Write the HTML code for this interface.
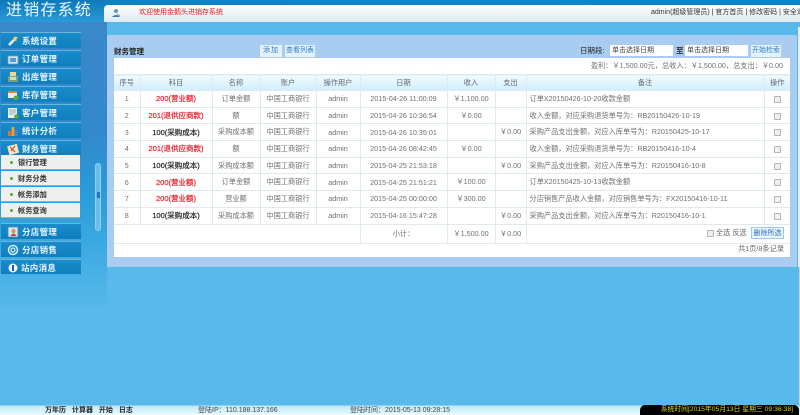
<!DOCTYPE html>
<html><head><meta charset="utf-8"><style>
html,body{margin:0;padding:0}
body{width:800px;height:415px;position:relative;overflow:hidden;background:#58b9ea;font-family:"Liberation Sans","Noto Sans CJK SC",sans-serif;font-size:7.5px;color:#666}
#w{left:0;top:0;width:800px;height:415px;filter:blur(.3px);overflow:hidden}
div{position:absolute;box-sizing:border-box;white-space:nowrap}
.m{left:1px;width:80px;height:16px;background:linear-gradient(#1a8ccb,#0f7ebc);border-top:1px solid #6bb4dc;color:#e8f6ff;font-weight:bold;font-size:8.5px;line-height:16px;padding-left:21px;letter-spacing:.3px}
.m svg{position:absolute;left:6px;top:2px}
.s{left:1px;width:79px;height:15px;background:#efefef;border-bottom:1px solid #aaa;color:#333;font-size:7.2px;line-height:16px;padding-left:17px;font-weight:bold}
.s:before{content:"";position:absolute;left:9px;top:6px;width:3px;height:3px;border-radius:2px;background:#5aa832}
table{border-collapse:collapse;table-layout:fixed;position:absolute;left:114px;top:74px;width:676px;background:#fff}
td,th{border:1px solid #dfeaee;text-align:center;padding:0;height:15.7px;font-size:7.2px;font-weight:normal;color:#707070;white-space:nowrap;overflow:hidden}
tr td:first-child,tr th:first-child{border-left:none}
tr td:last-child,tr th:last-child{border-right:none}
th{background:linear-gradient(#f2fcff,#cfeefa);height:15px;color:#667}
td.l{text-align:left;padding-left:3px}
td.r{color:#e8202a;font-size:7.5px;-webkit-text-stroke:.2px #e8202a}
td.b{color:#222;font-size:7.5px;-webkit-text-stroke:.2px #222}
i.c{display:inline-block;width:7px;height:7px;border:1px solid #b4b4b4;border-radius:1px;background:#f0f0f0;vertical-align:middle;box-sizing:border-box}
.btn{background:#e4f2fb;color:#2a7cc0;font-size:7px;line-height:12px;height:12px;text-align:center}
.in{background:#fff;color:#444;height:11px;line-height:12px;font-size:7px;padding-left:2px;width:63px}
</style></head><body><div id="w">
<div style="left:0;top:0;width:800px;height:22px;background:linear-gradient(90deg,#1180c0,#0f86c8 40%,#0c86c8)"></div>
<div style="left:0;top:0;width:104px;height:22px;background:linear-gradient(#0e78b8,#2a9ad8)"></div>
<div style="left:6px;top:0;color:#e8f8ff;font-size:16px;line-height:21px;letter-spacing:1.2px;height:22px">进销存系统</div>
<div style="left:104px;top:5px;width:696px;height:17px;background:linear-gradient(#fff,#dceaf2);border-radius:4px 0 0 0"></div>
<svg style="position:absolute;left:111px;top:8px" width="10" height="10" viewBox="0 0 10 10"><circle cx="5" cy="3" r="2" fill="#5a9ad0"/><path d="M1 9q4-4 8 0z" fill="#3a78b8"/><path d="M6 6l3 2" stroke="#c84" stroke-width="1"/></svg>
<div style="left:139px;top:8px;color:#e02020;font-size:7px;line-height:10px">欢迎使用金鹅头进销存系统</div>
<div style="right:0;top:8px;color:#333;font-size:7px;line-height:10px;width:179px;overflow:hidden;left:651px">admin(超级管理员) | 官方首页 | 修改密码 | 安全退出</div>

<div style="left:0;top:22px;width:107px;height:383px;background:linear-gradient(#3a88c8 0,#3288cc 28%,#2a9cd8 45%,#3fabe2 60%,#58b9ea 75%)"></div>
<div style="left:107px;top:35px;width:690px;height:232px;background:#a9cdf0"></div>
<div style="left:798px;top:27px;width:2px;height:240px;background:#e6eef4"></div>
<div style="left:799px;top:267px;width:1px;height:138px;background:#c8d8e4"></div>
<div style="left:114px;top:47px;color:#222;font-weight:bold;font-size:7.5px;line-height:10px">财务管理</div>
<div class="btn" style="left:260px;top:45px;width:22px;letter-spacing:1px">添加</div>
<div class="btn" style="left:285px;top:45px;width:30px">查看列表</div>
<div style="left:580px;top:45px;color:#222;font-size:7.5px;line-height:12px">日期段:</div>
<div class="in" style="left:610px;top:45px">单击选择日期</div>
<div style="left:676px;top:45px;color:#333;font-size:7.5px;line-height:12px;font-weight:bold">至</div>
<div class="in" style="left:685px;top:45px">单击选择日期</div>
<div class="btn" style="left:751px;top:45px;width:30px">开始检索</div>

<div style="left:114px;top:58px;width:676px;height:199px;background:#fff"></div>
<div style="left:114px;top:58px;width:669px;height:16px;text-align:right;color:#707070;font-size:7.2px;line-height:16px">盈利：￥1,500.00元，总收入：￥1,500.00，总支出：￥0.00</div>
<table>
<colgroup><col style="width:26px"><col style="width:72px"><col style="width:48px"><col style="width:56px"><col style="width:44px"><col style="width:87px"><col style="width:48px"><col style="width:31px"><col style="width:238px"><col style="width:26px"></colgroup>
<tr><th>序号</th><th>科目</th><th>名称</th><th>账户</th><th>操作用户</th><th>日期</th><th>收入</th><th>支出</th><th>备注</th><th>操作</th></tr>
<tr><td>1</td><td class="r">200(营业额)</td><td>订单金额</td><td>中国工商银行</td><td>admin</td><td>2015-04-26 11:00:09</td><td>￥1,100.00</td><td></td><td class="l">订单X20150426-10-20收款金额</td><td><i class="c"></i></td></tr>
<tr><td>2</td><td class="r">201(退供应商款)</td><td>额</td><td>中国工商银行</td><td>admin</td><td>2015-04-26 10:36:54</td><td>￥0.00</td><td></td><td class="l">收入金额，对应采购退货单号为：RB20150426-10-19</td><td><i class="c"></i></td></tr>
<tr><td>3</td><td class="b">100(采购成本)</td><td>采购成本额</td><td>中国工商银行</td><td>admin</td><td>2015-04-26 10:35:01</td><td></td><td>￥0.00</td><td class="l">采购产品支出金额，对应入库单号为：R20150425-10-17</td><td><i class="c"></i></td></tr>
<tr><td>4</td><td class="r">201(退供应商款)</td><td>额</td><td>中国工商银行</td><td>admin</td><td>2015-04-26 08:42:45</td><td>￥0.00</td><td></td><td class="l">收入金额，对应采购退货单号为：RB20150416-10-4</td><td><i class="c"></i></td></tr>
<tr><td>5</td><td class="b">100(采购成本)</td><td>采购成本额</td><td>中国工商银行</td><td>admin</td><td>2015-04-25 21:53:18</td><td></td><td>￥0.00</td><td class="l">采购产品支出金额，对应入库单号为：R20150416-10-8</td><td><i class="c"></i></td></tr>
<tr><td>6</td><td class="r">200(营业额)</td><td>订单金额</td><td>中国工商银行</td><td>admin</td><td>2015-04-25 21:51:21</td><td>￥100.00</td><td></td><td class="l">订单X20150425-10-13收款金额</td><td><i class="c"></i></td></tr>
<tr><td>7</td><td class="r">200(营业额)</td><td>营业额</td><td>中国工商银行</td><td>admin</td><td>2015-04-25 00:00:00</td><td>￥300.00</td><td></td><td class="l">分店销售产品收入金额，对应销售单号为：FX20150416-10-11</td><td><i class="c"></i></td></tr>
<tr><td>8</td><td class="b">100(采购成本)</td><td>采购成本额</td><td>中国工商银行</td><td>admin</td><td>2015-04-16 15:47:28</td><td></td><td>￥0.00</td><td class="l">采购产品支出金额，对应入库单号为：R20150416-10-1</td><td><i class="c"></i></td></tr>
<tr><td colspan="5" style="height:18px"></td><td>小计：</td><td>￥1,500.00</td><td>￥0.00</td><td colspan="2"></td></tr>
</table>
<div style="left:707px;top:228px;font-size:7.2px;line-height:10px;color:#666"><i class="c"></i> 全选 反选</div>
<div class="btn" style="left:751px;top:227px;width:33px;border:1px solid #9cc8e8;background:#eaf5fc;line-height:11px;height:12px;color:#2a70b8">删除所选</div>
<div style="left:114px;top:241px;width:670px;height:16px;text-align:right;font-size:7.2px;line-height:16px">共1页/8条记录</div>

<div class="m" style="top:32px"><svg width="12" height="12" viewBox="0 0 12 12"><path d="M2 10L8 4" stroke="#f0f0f0" stroke-width="2.5"/><path d="M7 2q3-1 4 1l-2 1 1 1q-2 2-4 0z" fill="#f4d060"/></svg>系统设置</div>
<div class="m" style="top:50px"><svg width="12" height="12" viewBox="0 0 12 12"><rect x="1" y="3" width="10" height="8" fill="#cfe4f0" stroke="#7a98a8" stroke-width=".7"/><rect x="3" y="5" width="6" height="4" fill="#5a9ad0"/></svg>订单管理</div>
<div class="m" style="top:68px"><svg width="12" height="12" viewBox="0 0 12 12"><path d="M3 1h6v4H3z" fill="#e8d890"/><path d="M1 5h10v6H1z" fill="#7aa080"/><path d="M3 6h6v3H3z" fill="#cfe0c0"/></svg>出库管理</div>
<div class="m" style="top:86px"><svg width="12" height="12" viewBox="0 0 12 12"><rect x="1" y="2" width="9" height="7" fill="#e8eef2"/><rect x="1" y="2" width="9" height="2" fill="#e08030"/><circle cx="9" cy="9" r="2.5" fill="#58a838"/></svg>库存管理</div>
<div class="m" style="top:104px"><svg width="12" height="12" viewBox="0 0 12 12"><rect x="1" y="1" width="9" height="10" fill="#e8eef2"/><path d="M2 3h7M2 5h7M2 7h5" stroke="#7a98a8" stroke-width=".8"/><circle cx="9.5" cy="9.5" r="2.3" fill="#58a838"/></svg>客户管理</div>
<div class="m" style="top:122px"><svg width="12" height="12" viewBox="0 0 12 12"><rect x="1" y="6" width="3" height="5" fill="#e07028"/><rect x="4.5" y="2" width="3" height="9" fill="#e8a030"/><rect x="8" y="5" width="3" height="6" fill="#4a80d0"/></svg>统计分析</div>
<div class="m" style="top:140px;height:15px"><svg width="12" height="12" viewBox="0 0 12 12"><rect x="1" y="2" width="10" height="9" fill="#f0e8c8" transform="rotate(-15 6 6)"/><path d="M3 4l5 5M8 3L4 8" stroke="#d05030" stroke-width="1.2"/></svg>财务管理</div>
<div class="s" style="top:155px">银行管理</div>
<div class="s" style="top:171px">财务分类</div>
<div class="s" style="top:187px">帐务添加</div>
<div class="s" style="top:203px">帐务查询</div>
<div class="m" style="top:223px"><svg width="12" height="12" viewBox="0 0 12 12"><rect x="1" y="1" width="10" height="10" fill="#d8e8f4" stroke="#5a80a8" stroke-width=".8"/><circle cx="6.5" cy="5" r="2" fill="#e09050"/><path d="M3.5 10q3-5 6 0z" fill="#c04838"/></svg>分店管理</div>
<div class="m" style="top:241px"><svg width="12" height="12" viewBox="0 0 12 12"><circle cx="6" cy="6" r="4.5" fill="none" stroke="#dfeef8" stroke-width="1.5"/><circle cx="6" cy="6" r="2" fill="none" stroke="#dfeef8" stroke-width="1.2"/></svg>分店销售</div>
<div class="m" style="top:259px;height:15px;padding-left:20px"><svg width="12" height="12" viewBox="0 0 12 12"><circle cx="6" cy="6" r="4.5" fill="#f0f6fc"/><rect x="5" y="3" width="2" height="6" fill="#1a60b0"/></svg>站内消息</div>
<div style="left:95px;top:163px;width:6px;height:68px;border-radius:3px;background:#6cbcea;border:1px solid #94d0f2"></div>
<div style="left:97px;top:192px;width:3px;height:6px;background:#2a70c0"></div>

<div style="left:0;top:405px;width:800px;height:10px;background:linear-gradient(#bfe8f8,#eefbff);border-top:1px solid #8fd0ee"></div>
<div style="left:45px;top:406px;color:#222;font-weight:bold;font-size:7px;line-height:10px;word-spacing:4px">万年历 计算器 开始 日志</div>
<div style="left:198px;top:406px;color:#444;font-size:7px;line-height:10px">登陆IP：110.188.137.166</div>
<div style="left:350px;top:406px;color:#444;font-size:7px;line-height:10px">登陆时间：2015-05-13 09:28:15</div>
<div style="left:640px;top:405px;width:159px;height:10px;background:#000;border-radius:5px 5px 0 0;color:#d8d820;font-size:6.8px;line-height:10px;text-align:right;padding-right:6px">系统时间[2015年05月13日 星期三 09:36:38]</div>
</div></body></html>
